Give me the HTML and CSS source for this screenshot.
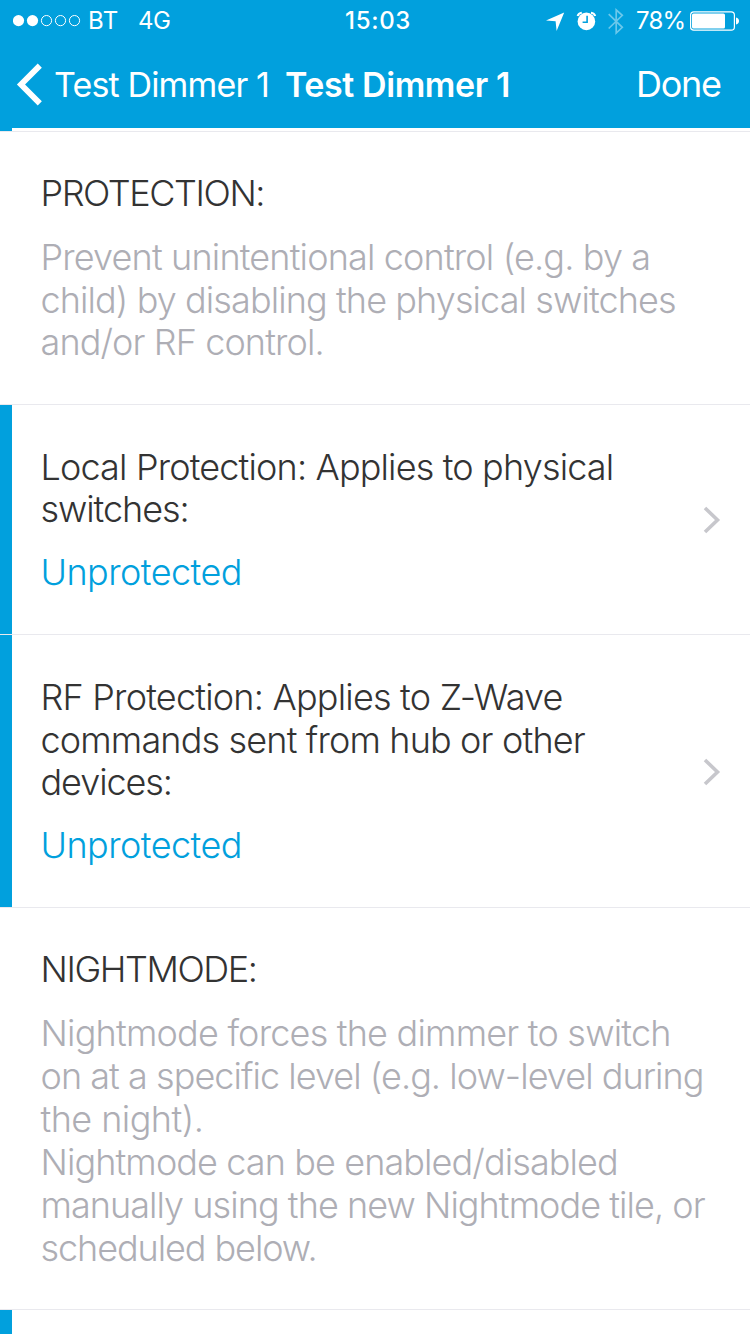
FILE: index.html
```html
<!DOCTYPE html>
<html lang="en">
<head>
<meta charset="utf-8">
<title>Test Dimmer 1</title>
<link rel="stylesheet" href="styles.css">
</head>
<body>
<div class="screen">
  <header class="top">
    <div class="status">
      <svg class="signal" width="68" height="12" viewBox="0 0 68 12">
        <g fill="#fff"><circle cx="5.5" cy="5.6" r="5.6"/><circle cx="19.5" cy="5.6" r="5.6"/></g>
        <g fill="none" stroke="#fff"><circle cx="33.5" cy="5.6" r="5.1"/><circle cx="47.5" cy="5.6" r="5.1"/><circle cx="61.5" cy="5.6" r="5.1"/></g>
      </svg>
      <span class="carrier">BT</span>
      <span class="network">4G</span>
      <span class="time">15:03</span>
      <svg class="icons" width="78" height="28" viewBox="546 6 78 28">
        <path fill="#fff" d="M545.8 19.6 564.2 11.6 556.6 30 555.6 20.3z"/>
        <circle cx="586.4" cy="20.4" r="8.8" fill="#fff"/>
        <path fill="none" stroke="#fff" stroke-width="2" d="M577.6 15Q578.4 12.2 581.8 11.8M595.2 15Q594.4 12.2 591 11.8"/>
        <path fill="none" stroke="#01a0dd" stroke-width="1.6" d="M587.1 14.8V21.2H582.6"/>
        <path fill="none" stroke="#fff" stroke-opacity=".42" stroke-width="1.7" d="M608.7 13.2 622.3 26.3 616.2 32V9L622.3 14.4 608.7 27.5"/>
      </svg>
      <span class="percent">78%</span>
      <svg class="battery" width="50" height="20" viewBox="0 0 50 20">
        <rect x=".6" y=".9" width="43.8" height="18.2" rx="3.2" fill="none" stroke="#fff" stroke-width="1.2"/>
        <rect x="2" y="2.4" width="33" height="15.2" rx="1.5" fill="#fff"/>
        <path d="M46 6.5Q49 7.4 49 10T46 13.5z" fill="#fff"/>
      </svg>
    </div>
    <nav class="nav">
      <svg class="back" width="28" height="44" viewBox="0 0 28 44"><path d="M25.8 2.6 7 21.5 25.8 40.4" fill="none" stroke="#fff" stroke-width="5.8"/></svg>
      <span class="parent">Test Dimmer 1</span>
      <span class="title">Test Dimmer 1</span>
      <span class="done">Done</span>
    </nav>
  </header>
  <main>
    <div class="row sliver marked"></div>
    <section class="row protection">
      <h2><span class="line caps">PROTECTION:</span></h2>
      <p class="note"><span class="line">Prevent unintentional control (e.g. by a</span> <span class="line tight">child) by disabling the physical switches</span> <span class="line tight">and/or RF control.</span></p>
    </section>
    <section class="row local marked">
      <h2><span class="line">Local Protection: Applies to physical</span> <span class="line tighter">switches:</span></h2>
      <p class="value"><span class="line loose">Unprotected</span></p>
      <svg class="chevron" width="18" height="28" viewBox="0 0 18 28"><path d="M2 2 14.5 14 2 26" fill="none" stroke="#c7c7cc" stroke-width="3.6"/></svg>
    </section>
    <section class="row rf marked">
      <h2><span class="line snug">RF Protection: Applies to Z-Wave</span> <span class="line">commands sent from hub or other</span> <span class="line tighter">devices:</span></h2>
      <p class="value"><span class="line loose">Unprotected</span></p>
      <svg class="chevron" width="18" height="28" viewBox="0 0 18 28"><path d="M2 2 14.5 14 2 26" fill="none" stroke="#c7c7cc" stroke-width="3.6"/></svg>
    </section>
    <section class="row night">
      <h2><span class="line caps">NIGHTMODE:</span></h2>
      <p class="note"><span class="line snug">Nightmode forces the dimmer to switch</span> <span class="line dense">on at a specific level (e.g. low-level during</span> <span class="line loose">the night).</span> <span class="line tight">Nightmode can be enabled/disabled</span> <span class="line dense">manually using the new Nightmode tile, or</span> <span class="line tighter">scheduled below.</span></p>
    </section>
    <div class="row next marked"></div>
  </main>
</div>
</body>
</html>
```
FILE: styles.css
```css
* { box-sizing: border-box; margin: 0; }
body { background: #fff; font-family: Inter, "Liberation Sans", sans-serif; }
.screen { width: 750px; height: 1334px; overflow: hidden; }
.top { height: 128px; background: #01a0dd; color: #fff; white-space: nowrap; }
.status { height: 41px; display: flex; align-items: center; padding-left: 13px; font-size: 24px; line-height: 41px; }
.carrier { margin-left: 7px; width: 50px; letter-spacing: .5px; }
.network { width: 207px; letter-spacing: -.5px; }
.time { width: 201px; font-weight: 500; letter-spacing: .7px; }
.percent { margin-left: 12px; width: 54px; letter-spacing: -.8px; }
.nav { height: 87px; display: flex; align-items: center; padding-left: 14px; font-size: 34px; line-height: 87px; }
.parent { margin-left: 12px; width: 231px; letter-spacing: -.85px; }
.title { width: 351px; font-weight: 600; letter-spacing: -.42px; }
.done { font-size: 36px; letter-spacing: -1.3px; }
.row { position: relative; border-bottom: 1px solid #e9e9ee; padding: 40px 0 0 40.5px; }
.marked { background: linear-gradient(#01a0dd, #01a0dd) 0 0 / 12px 100% no-repeat; }
.sliver { height: 4px; padding: 0; }
.protection { height: 273px; }
.local { height: 230px; padding-top: 40.6px; }
.rf { height: 273px; padding-top: 40.9px; }
.night { height: 402px; padding-top: 40.4px; }
.next { height: 24px; padding: 0; border: 0; }
h2, p { font-size: 36px; line-height: 42.8px; font-weight: 300; color: #333; }
.line { display: block; width: max-content; white-space: nowrap; letter-spacing: -.84px; }
.line.loose { letter-spacing: -.55px; }
.line.snug { letter-spacing: -.79px; }
.line.tight { letter-spacing: -.9px; }
.line.dense { letter-spacing: -.95px; }
.line.tighter { letter-spacing: -1.07px; }
.line.caps { letter-spacing: -1.42px; }
.note { margin-top: 21px; color: #aeaeb5; }
.night .note { line-height: 42.9px; }
.value { margin-top: 20px; color: #01a0dd; }
.chevron { position: absolute; right: 29px; }
.local .chevron { top: 101px; }
.rf .chevron { top: 123px; }
```
